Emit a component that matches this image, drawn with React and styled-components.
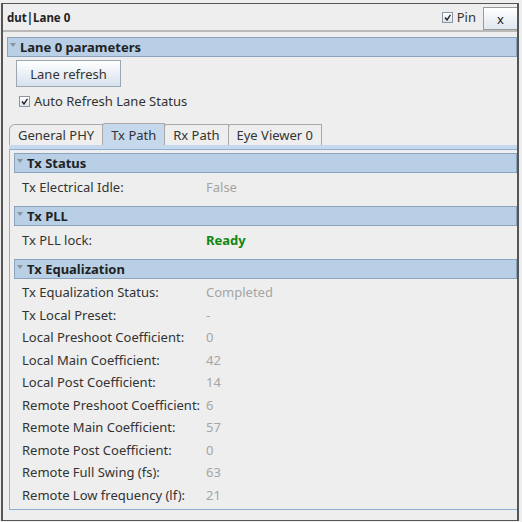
import React from 'react'
import styled, { createGlobalStyle } from 'styled-components'

const Global = createGlobalStyle`
  html, body {
    margin: 0;
    padding: 0;
    background: #eeeeee;
    font-family: "Noto Sans", "DejaVu Sans", sans-serif;
    color: #333333;
  }
`

const Frame = styled.div`
  margin: 3px 0 0 1px;
  width: 514px;
  height: 516px;
  border: 1px solid #555555;
  border-right-width: 2px;
  border-left-width: 2px;
  background: #eeeeee;
  display: flex;
  flex-direction: column;
  box-sizing: content-box;
`

const TitleBar = styled.div`
  height: 28px;
  display: flex;
  align-items: center;
  padding: 0 0 0 4px;
  border-bottom: 2px solid #b9b9b9;
`

const Title = styled.div`
  flex: 1;
  font-size: 11.5px;
  font-weight: bold;
  color: #222222;
`

const PinLabel = styled.label`
  display: flex;
  align-items: center;
  gap: 4px;
  font-size: 13px;
  color: #333333;
  margin-right: 7px;
`

const CloseButton = styled.button`
  width: 34px;
  height: 23px;
  margin-top: 3px;
  border: 1px solid #9a9a9a;
  border-right: none;
  background: linear-gradient(#ffffff, #dfe7ef);
  font-family: "Noto Sans", sans-serif;
  font-size: 13px;
  color: #222222;
  padding: 0;
`

const Body = styled.div`
  flex: 1;
  padding: 5px 0 0 4px;
  display: flex;
  flex-direction: column;
`

const SectionHeader = styled.div`
  height: 18px;
  display: flex;
  align-items: center;
  gap: 4px;
  padding-left: 2px;
  background: #b8cfe5;
  border: 1px solid #8ba3bd;
  font-size: 13px;
  font-weight: bold;
  color: #222222;
`

const Arrow = styled.span`
  width: 0;
  height: 0;
  border-left: 3px solid transparent;
  border-right: 3px solid transparent;
  border-top: 4px solid #8a929c;
  margin-bottom: 5px;
`

const Controls = styled.div`
  padding: 3px 0 0 9px;
  display: flex;
  flex-direction: column;
  align-items: flex-start;
`

const Button = styled.button`
  width: 105px;
  height: 27px;
  border: 1px solid #9aa6b2;
  background: linear-gradient(#ffffff, #d7e2ee);
  font-family: "Noto Sans", sans-serif;
  font-size: 13px;
  color: #333333;
  padding: 0;
`

const CheckRow = styled.label`
  display: flex;
  align-items: center;
  gap: 4px;
  margin: 5px 0 0 3px;
  font-size: 13px;
  color: #333333;
`

const Box = styled.span`
  width: 9px;
  height: 9px;
  border: 1px solid #8a96a3;
  background: linear-gradient(#ffffff, #dde5ee);
  display: inline-flex;
  align-items: center;
  justify-content: center;
`

const Tabs = styled.div`
  margin: 13px 0 0 2px;
  display: flex;
  align-items: flex-end;
  height: 22px;
`

const Tab = styled.div`
  height: ${p => (p.$active ? 22 : 21)}px;
  box-sizing: border-box;
  padding: 0 8px;
  display: flex;
  align-items: center;
  font-size: 13px;
  color: #333333;
  border: 1px solid #a9a9a9;
  border-bottom: none;
  margin-right: -1px;
  background: ${p => (p.$active ? '#c6d9ec' : '#eeeeee')};
  border-top-left-radius: ${p => (p.$first ? '6px' : '3px')};
  position: relative;
  z-index: ${p => (p.$active ? 1 : 0)};
`

const TabPanel = styled.div`
  margin-left: 2px;
  flex: 1;
  border-top: 4px solid #c6d9ec;
  display: flex;
  flex-direction: column;
  margin-bottom: 10px;
`

const Panel = styled.div`
  flex: 1;
  border: 1px solid #8fb0d2;
  border-right: none;
  padding: 3px 0 0 4px;
  display: flex;
  flex-direction: column;
`

const Rows = styled.div`
  padding: ${p => (p.$single ? '0 0 5px 8px' : '2px 0 3px 8px')};
`

const Row = styled.div`
  display: flex;
  align-items: center;
  height: ${p => p.$h || 22.5}px;
  font-size: 13px;
`

const Label = styled.span`
  width: 184px;
  color: #333333;
  white-space: nowrap;
`

const Value = styled.span`
  color: ${p => (p.$ok ? '#10880f' : '#a5a5a5')};
  font-weight: ${p => (p.$ok ? 'bold' : 'normal')};
`

function Header({ children }) {
  return (
    <SectionHeader>
      <Arrow />
      {children}
    </SectionHeader>
  )
}

function Check() {
  return (
    <Box>
      <svg width="7" height="7" viewBox="0 0 7 7">
        <path d="M1 3.5 L3 6 L6.5 0.8" stroke="#222" strokeWidth="1.4" fill="none" />
      </svg>
    </Box>
  )
}

const eq = [
  ['Tx Equalization Status:', 'Completed'],
  ['Tx Local Preset:', '-'],
  ['Local Preshoot Coefficient:', '0'],
  ['Local Main Coefficient:', '42'],
  ['Local Post Coefficient:', '14'],
  ['Remote Preshoot Coefficient:', '6'],
  ['Remote Main Coefficient:', '57'],
  ['Remote Post Coefficient:', '0'],
  ['Remote Full Swing (fs):', '63'],
  ['Remote Low frequency (lf):', '21'],
]

export default function App() {
  return (
    <>
      <Global />
      <Frame>
        <TitleBar>
          <Title>dut|Lane 0</Title>
          <PinLabel>
            <Check />
            Pin
          </PinLabel>
          <CloseButton>x</CloseButton>
        </TitleBar>
        <Body>
          <Header>Lane 0 parameters</Header>
          <Controls>
            <Button>Lane refresh</Button>
            <CheckRow>
              <Check />
              Auto Refresh Lane Status
            </CheckRow>
          </Controls>
          <Tabs>
            <Tab $first>General PHY</Tab>
            <Tab $active>Tx Path</Tab>
            <Tab>Rx Path</Tab>
            <Tab>Eye Viewer 0</Tab>
          </Tabs>
          <TabPanel>
            <Panel>
              <Header>Tx Status</Header>
              <Rows $single>
                <Row $h={28}>
                  <Label>Tx Electrical Idle:</Label>
                  <Value>False</Value>
                </Row>
              </Rows>
              <Header>Tx PLL</Header>
              <Rows $single>
                <Row $h={28}>
                  <Label>Tx PLL lock:</Label>
                  <Value $ok>Ready</Value>
                </Row>
              </Rows>
              <Header>Tx Equalization</Header>
              <Rows>
                {eq.map(([l, v]) => (
                  <Row key={l}>
                    <Label>{l}</Label>
                    <Value>{v}</Value>
                  </Row>
                ))}
              </Rows>
            </Panel>
          </TabPanel>
        </Body>
      </Frame>
    </>
  )
}
